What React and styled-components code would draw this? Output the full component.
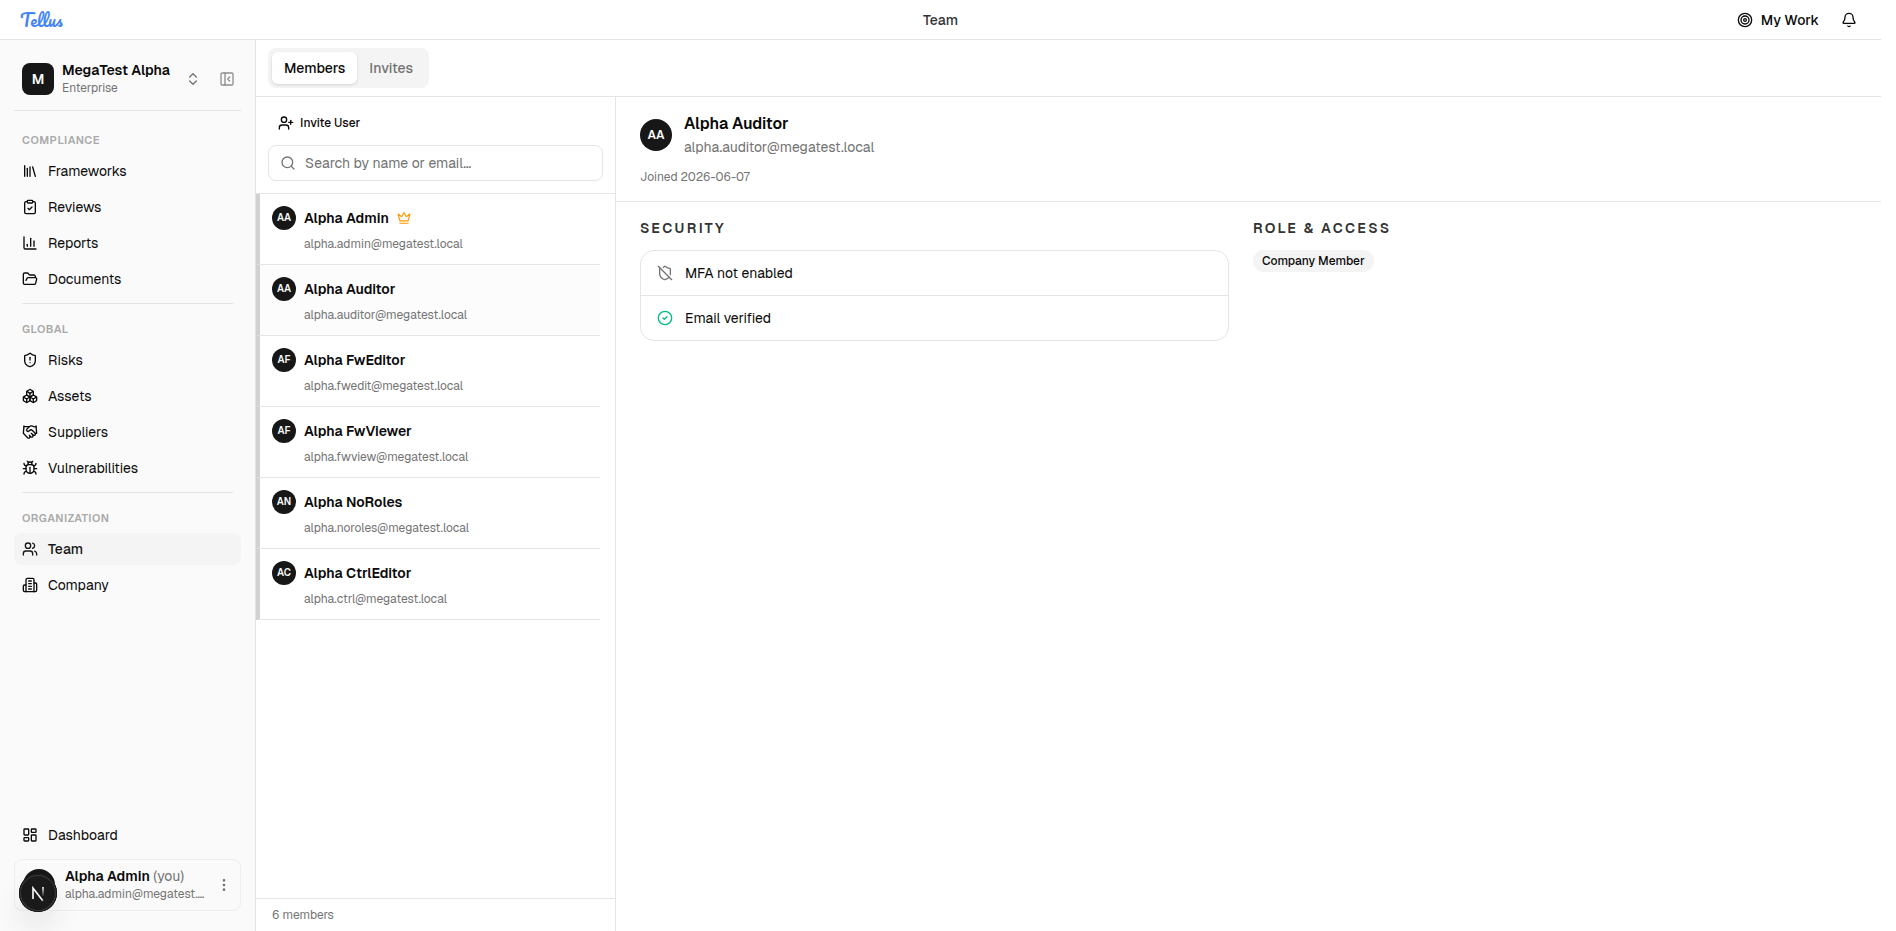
import React, { useState } from "react";
import styled, { createGlobalStyle } from "styled-components";
import {
  Bell,
  Boxes,
  Bug,
  ChartColumn,
  ChevronsUpDown,
  CircleCheck,
  ClipboardCheck,
  Crown,
  EllipsisVertical,
  FolderOpen,
  Handshake,
  LayoutDashboard,
  Library,
  PanelLeftClose,
  Search,
  ShieldAlert,
  ShieldOff,
  Target,
  UserPlus,
  Users
} from "lucide-react";

function BuildingIcon({ size }) {
  return (
    <svg
      width={size}
      height={size}
      viewBox="0 0 24 24"
      fill="none"
      stroke="currentColor"
      strokeWidth="2"
      strokeLinecap="round"
      strokeLinejoin="round"
      aria-hidden="true"
    >
      <path d="M6 22V4a2 2 0 0 1 2-2h8a2 2 0 0 1 2 2v18Z" />
      <path d="M6 12H4a2 2 0 0 0-2 2v6a2 2 0 0 0 2 2h2" />
      <path d="M18 9h2a2 2 0 0 1 2 2v9a2 2 0 0 1-2 2h-2" />
      <path d="M10 6h4M10 10h4M10 14h4M10 18h4" />
    </svg>
  );
}

const NAV = [
  {
    title: "Compliance",
    items: [
      { label: "Frameworks", icon: Library },
      { label: "Reviews", icon: ClipboardCheck },
      { label: "Reports", icon: ChartColumn },
      { label: "Documents", icon: FolderOpen }
    ]
  },
  {
    title: "Global",
    items: [
      { label: "Risks", icon: ShieldAlert },
      { label: "Assets", icon: Boxes },
      { label: "Suppliers", icon: Handshake },
      { label: "Vulnerabilities", icon: Bug }
    ]
  },
  {
    title: "Organization",
    items: [
      { label: "Team", icon: Users },
      { label: "Company", icon: BuildingIcon }
    ]
  }
];

const MEMBERS = [
  { name: "Alpha Admin", email: "alpha.admin@megatest.local", owner: true },
  { name: "Alpha Auditor", email: "alpha.auditor@megatest.local" },
  { name: "Alpha FwEditor", email: "alpha.fwedit@megatest.local" },
  { name: "Alpha FwViewer", email: "alpha.fwview@megatest.local" },
  { name: "Alpha NoRoles", email: "alpha.noroles@megatest.local" },
  { name: "Alpha CtrlEditor", email: "alpha.ctrl@megatest.local" }
];

function getInitials(name) {
  return name
    .split(" ")
    .map(part => part[0])
    .join("");
}

function NavItem({ item, active }) {
  const Icon = item.icon;
  return (
    <NavLink href="#" $active={active} aria-current={active ? "page" : undefined}>
      <Icon size={16} />
      {item.label}
    </NavLink>
  );
}

function Sidebar() {
  return (
    <SidebarWrapper>
      <Workspace>
        <WorkspaceButton>
          <WorkspaceLogo>M</WorkspaceLogo>
          <Lines>
            <StrongText>MegaTest Alpha</StrongText>
            <SmallText>Enterprise</SmallText>
          </Lines>
          <ChevronsUpDown size={16} />
        </WorkspaceButton>
        <IconButton aria-label="Collapse sidebar">
          <PanelLeftClose size={16} color="#8f8f8f" />
        </IconButton>
      </Workspace>
      <Nav>
        {NAV.map(group => (
          <NavGroup key={group.title}>
            <NavTitle>{group.title}</NavTitle>
            {group.items.map(item => (
              <NavItem
                key={item.label}
                item={item}
                active={item.label === "Team"}
              />
            ))}
          </NavGroup>
        ))}
      </Nav>
      <NavItem item={{ label: "Dashboard", icon: LayoutDashboard }} />
      <UserCard>
        <AvatarStack>
          <Avatar $size={32}>AA</Avatar>
          <DevBadge aria-label="Open dev tools">
            <svg width="38" height="38" viewBox="0 0 38 38" fill="none">
              <defs>
                <linearGradient id="diagonal" x1="18" y1="20" x2="25" y2="28" gradientUnits="userSpaceOnUse">
                  <stop stopColor="#fff" />
                  <stop offset="0.7" stopColor="#fff" />
                  <stop offset="1" stopColor="#fff" stopOpacity="0" />
                </linearGradient>
                <linearGradient id="stem" x1="24" y1="13" x2="24" y2="23" gradientUnits="userSpaceOnUse">
                  <stop stopColor="#fff" />
                  <stop offset="1" stopColor="#fff" stopOpacity="0" />
                </linearGradient>
              </defs>
              <path d="M14 25V14L24 27" stroke="url(#diagonal)" strokeWidth="1.6" />
              <path d="M24 13V22" stroke="url(#stem)" strokeWidth="1.6" />
            </svg>
          </DevBadge>
        </AvatarStack>
        <Lines>
          <StrongText>
            Alpha Admin <Muted>(you)</Muted>
          </StrongText>
          <SmallText>alpha.admin@megatest.local</SmallText>
        </Lines>
        <IconButton aria-label="Account menu">
          <EllipsisVertical size={16} />
        </IconButton>
      </UserCard>
    </SidebarWrapper>
  );
}

function MemberListItem({ member, active, onClick }) {
  return (
    <MemberRow $active={active} onClick={onClick}>
      <MemberTitle>
        <Avatar $size={24}>{getInitials(member.name)}</Avatar>
        <StrongText>{member.name}</StrongText>
        {member.owner && <Crown size={14} color="#fe9a00" />}
      </MemberTitle>
      <MemberEmail>{member.email}</MemberEmail>
    </MemberRow>
  );
}

function MemberDetail({ member }) {
  return (
    <Detail>
      <DetailHeader>
        <Person>
          <Avatar $size={32}>{getInitials(member.name)}</Avatar>
          <div>
            <PersonName>{member.name}</PersonName>
            <PersonEmail>{member.email}</PersonEmail>
          </div>
        </Person>
        <SmallText>Joined 2026-06-07</SmallText>
      </DetailHeader>
      <DetailBody>
        <Section>
          <SectionTitle>Security</SectionTitle>
          <Card>
            <CardRow>
              <ShieldOff size={16} color="#737373" />
              MFA not enabled
            </CardRow>
            <CardRow>
              <CircleCheck size={16} color="#00bc7d" />
              Email verified
            </CardRow>
          </Card>
        </Section>
        <Section>
          <SectionTitle>Role &amp; Access</SectionTitle>
          <Badge>Company Member</Badge>
        </Section>
      </DetailBody>
    </Detail>
  );
}

export default function App() {
  const [selected, setSelected] = useState(1);
  const [tab, setTab] = useState("Members");
  const [query, setQuery] = useState("");

  return (
    <Page>
      <GlobalStyle />
      <TopBar>
        <Brand href="#">Tellus</Brand>
        <PageTitle>Team</PageTitle>
        <TopActions>
          <TopButton>
            <Target size={16} />
            My Work
          </TopButton>
          <TopButton aria-label="Notifications">
            <Bell size={16} />
          </TopButton>
        </TopActions>
      </TopBar>
      <Body>
        <Sidebar />
        <Main>
          <TabBar>
            <TabList role="tablist">
              {["Members", "Invites"].map(name => (
                <Tab
                  key={name}
                  role="tab"
                  aria-selected={tab === name}
                  $active={tab === name}
                  onClick={() => setTab(name)}
                >
                  {name}
                </Tab>
              ))}
            </TabList>
          </TabBar>
          <Columns>
            <ListColumn>
              <ListTools>
                <InviteButton>
                  <UserPlus size={16} />
                  Invite User
                </InviteButton>
                <SearchBox>
                  <Search size={16} />
                  <SearchInput
                    aria-label="Search members"
                    placeholder="Search by name or email…"
                    value={query}
                    onChange={e => setQuery(e.target.value)}
                  />
                </SearchBox>
              </ListTools>
              <MemberList>
                {MEMBERS.map((member, index) => (
                  <MemberListItem
                    key={member.email}
                    member={member}
                    active={index === selected}
                    onClick={() => setSelected(index)}
                  />
                ))}
              </MemberList>
              <ListFooter>{MEMBERS.length} members</ListFooter>
            </ListColumn>
            <MemberDetail member={MEMBERS[selected]} />
          </Columns>
        </Main>
      </Body>
    </Page>
  );
}

const GlobalStyle = createGlobalStyle`
  * {
    box-sizing: border-box;
  }
  body {
    margin: 0;
    background: #fff;
    color: #0a0a0a;
    font-family: Geist, Inter, "Liberation Sans", sans-serif;
    font-size: 14px;
    line-height: 20px;
  }
  button,
  input {
    font: inherit;
    color: inherit;
    border: 0;
    padding: 0;
    background: none;
  }
  button {
    cursor: pointer;
  }
  a {
    color: inherit;
    text-decoration: none;
  }
  svg {
    flex-shrink: 0;
  }
`;

const Page = styled.div`
  display: flex;
  flex-direction: column;
  min-height: 100vh;
  padding-right: 15px;
`;

const TopBar = styled.header`
  display: grid;
  grid-template-columns: 1fr auto 1fr;
  align-items: center;
  height: 40px;
  padding: 0 20px;
  border-bottom: 1px solid #e5e5e5;
`;

const Brand = styled.a`
  color: #4385f5;
  font-family: Pacifico, Lato, cursive;
  font-size: 17px;
  font-weight: 600;
`;

const PageTitle = styled.h1`
  margin: 0;
  color: #333;
  font-size: 14px;
  font-weight: 500;
`;

const TopActions = styled.div`
  display: flex;
  justify-content: flex-end;
  gap: 22px;
  padding-right: 4px;
`;

const TopButton = styled.button`
  display: flex;
  align-items: center;
  gap: 8px;
  font-weight: 500;
`;

const Body = styled.div`
  display: flex;
  flex: 1;
`;

const SidebarWrapper = styled.aside`
  display: flex;
  flex-direction: column;
  width: 256px;
  flex-shrink: 0;
  padding: 14px 14px 20px;
  background: #fafafa;
  border-right: 1px solid #e5e5e5;
`;

const Workspace = styled.div`
  display: flex;
  align-items: center;
  gap: 16px;
  padding: 6px 6px 12px 8px;
  border-bottom: 1px solid #e5e5e5;
`;

const WorkspaceButton = styled.button`
  display: flex;
  flex: 1;
  min-width: 0;
  align-items: center;
  gap: 8px;
  padding-right: 2px;
  text-align: left;
  color: #737373;
`;

const WorkspaceLogo = styled.span`
  display: flex;
  flex-shrink: 0;
  align-items: center;
  justify-content: center;
  width: 32px;
  height: 32px;
  border-radius: 8px;
  background: #171717;
  color: #fafafa;
  font-weight: 600;
`;

const Lines = styled.span`
  display: flex;
  flex: 1;
  flex-direction: column;
  min-width: 0;
  padding-bottom: 2px;
`;

const StrongText = styled.span`
  color: #0a0a0a;
  font-weight: 600;
  white-space: nowrap;
`;

const SmallText = styled.span`
  overflow: hidden;
  color: #737373;
  font-size: 12px;
  line-height: 16px;
  text-overflow: ellipsis;
  white-space: nowrap;
`;

const Muted = styled.span`
  color: #737373;
  font-weight: 400;
`;

const IconButton = styled.button`
  display: flex;
  color: #737373;
`;

const Nav = styled.nav`
  flex: 1;
  padding-top: 12px;
`;

const NavGroup = styled.div`
  display: flex;
  flex-direction: column;
  gap: 4px;

  & + &::before {
    content: "";
    height: 1px;
    margin: 8px 8px 4px;
    background: #e5e5e5;
  }
`;

const NavTitle = styled.h2`
  margin: 0 0 -4px;
  padding: 2px 8px 0;
  color: #a9a9a9;
  font-size: 11px;
  font-weight: 600;
  letter-spacing: 0.05em;
  line-height: 30px;
  text-transform: uppercase;
`;

const NavLink = styled.a`
  display: flex;
  align-items: center;
  gap: 10px;
  height: 32px;
  padding: 0 8px;
  border-radius: 8px;
  background: ${props => (props.$active ? "#f4f4f4" : "none")};
  color: ${props => (props.$active ? "#171717" : "#0a0a0a")};
  font-weight: ${props => (props.$active ? 500 : 400)};
`;

const UserCard = styled.div`
  display: flex;
  align-items: center;
  gap: 10px;
  height: 52px;
  margin-top: 8px;
  padding: 0 8px;
  border: 1px solid #eee;
  border-radius: 8px;
`;

const AvatarStack = styled.div`
  position: relative;
`;

const Avatar = styled.span`
  display: flex;
  flex-shrink: 0;
  align-items: center;
  justify-content: center;
  width: ${props => props.$size}px;
  height: ${props => props.$size}px;
  border-radius: 50%;
  background: #171717;
  color: #fafafa;
  font-size: ${props => (props.$size > 24 ? 12 : 10)}px;
  font-weight: 600;
`;

const DevBadge = styled.button`
  position: absolute;
  top: 5px;
  left: -4px;
  width: 38px;
  height: 38px;
  border-radius: 50%;
  background: #1a1a1a;
  box-shadow: inset 0 0 0 1px #171717, inset 0 0 0 2px #3a3a3a,
    0 16px 32px -8px rgba(0, 0, 0, 0.24);

  svg {
    display: block;
  }
`;

const Main = styled.main`
  display: flex;
  flex: 1;
  flex-direction: column;
  min-width: 0;
`;

const TabBar = styled.div`
  padding: 8px 12px;
  border-bottom: 1px solid #e5e5e5;
`;

const TabList = styled.div`
  display: inline-flex;
  padding: 4px;
  border-radius: 8px;
  background: #f4f4f4;
  vertical-align: top;
`;

const Tab = styled.button`
  height: 32px;
  padding: 0 12px;
  border-radius: 6px;
  background: ${props => (props.$active ? "#fff" : "none")};
  box-shadow: ${props =>
    props.$active ? "0 1px 3px rgba(0, 0, 0, 0.14)" : "none"};
  color: ${props => (props.$active ? "#0a0a0a" : "#737373")};
  font-weight: 500;
`;

const Columns = styled.div`
  display: flex;
  flex: 1;
`;

const ListColumn = styled.section`
  display: flex;
  flex-direction: column;
  width: 360px;
  flex-shrink: 0;
  border-right: 1px solid #e5e5e5;
`;

const ListTools = styled.div`
  display: flex;
  flex-direction: column;
  align-items: flex-start;
  gap: 8px;
  padding: 12px;
  border-bottom: 1px solid #e5e5e5;
`;

const InviteButton = styled.button`
  display: flex;
  align-items: center;
  gap: 6px;
  height: 28px;
  padding: 0 10px;
  font-size: 12px;
  font-weight: 500;
`;

const SearchBox = styled.label`
  display: flex;
  align-items: center;
  gap: 9px;
  width: 100%;
  height: 36px;
  padding: 0 11px;
  border: 1px solid #e5e5e5;
  border-radius: 8px;
  color: #737373;
`;

const SearchInput = styled.input`
  flex: 1;
  min-width: 0;
  outline: none;

  &::placeholder {
    color: #737373;
    opacity: 1;
  }
`;

const MemberList = styled.div`
  display: flex;
  flex: 1;
  flex-direction: column;
  padding-right: 15px;
`;

const MemberRow = styled.button`
  display: flex;
  flex-direction: column;
  gap: 6px;
  padding: 12px;
  border-left: 4px solid #d1d1d4;
  border-bottom: 1px solid #e5e5e5;
  background: ${props => (props.$active ? "#fcfcfc" : "#fff")};
  text-align: left;
`;

const MemberTitle = styled.span`
  display: flex;
  align-items: center;
  gap: 8px;
`;

const MemberEmail = styled(SmallText)`
  padding-left: 32px;
`;

const ListFooter = styled.div`
  padding: 8px 16px;
  border-top: 1px solid #e5e5e5;
  color: #737373;
  font-size: 12px;
  line-height: 16px;
`;

const Detail = styled.section`
  flex: 1;
  min-width: 0;
`;

const DetailHeader = styled.div`
  display: flex;
  flex-direction: column;
  gap: 12px;
  padding: 16px 24px;
  border-bottom: 1px solid #e5e5e5;
`;

const Person = styled.div`
  display: flex;
  align-items: center;
  gap: 12px;
`;

const PersonName = styled.h2`
  margin: 0 0 2px;
  font-size: 16px;
  font-weight: 600;
  line-height: 22px;
`;

const PersonEmail = styled.div`
  color: #737373;
`;

const DetailBody = styled.div`
  display: grid;
  grid-template-columns: 1fr 1fr;
  gap: 24px;
  margin-right: 15px;
  padding: 16px 24px;
`;

const Section = styled.section`
  display: flex;
  flex-direction: column;
  align-items: flex-start;
  gap: 12px;
`;

const SectionTitle = styled.h3`
  margin: 0;
  color: #333;
  font-size: 14px;
  font-weight: 600;
  letter-spacing: 0.16em;
  text-transform: uppercase;
`;

const Card = styled.div`
  width: 100%;
  border: 1px solid #e5e5e5;
  border-radius: 14px;
`;

const CardRow = styled.div`
  display: flex;
  align-items: center;
  gap: 12px;
  padding: 12px 16px;

  & + & {
    border-top: 1px solid #e5e5e5;
  }
`;

const Badge = styled.span`
  padding: 3px 9px;
  border-radius: 11px;
  background: #f4f4f4;
  font-size: 12px;
  font-weight: 500;
  line-height: 16px;
`;
